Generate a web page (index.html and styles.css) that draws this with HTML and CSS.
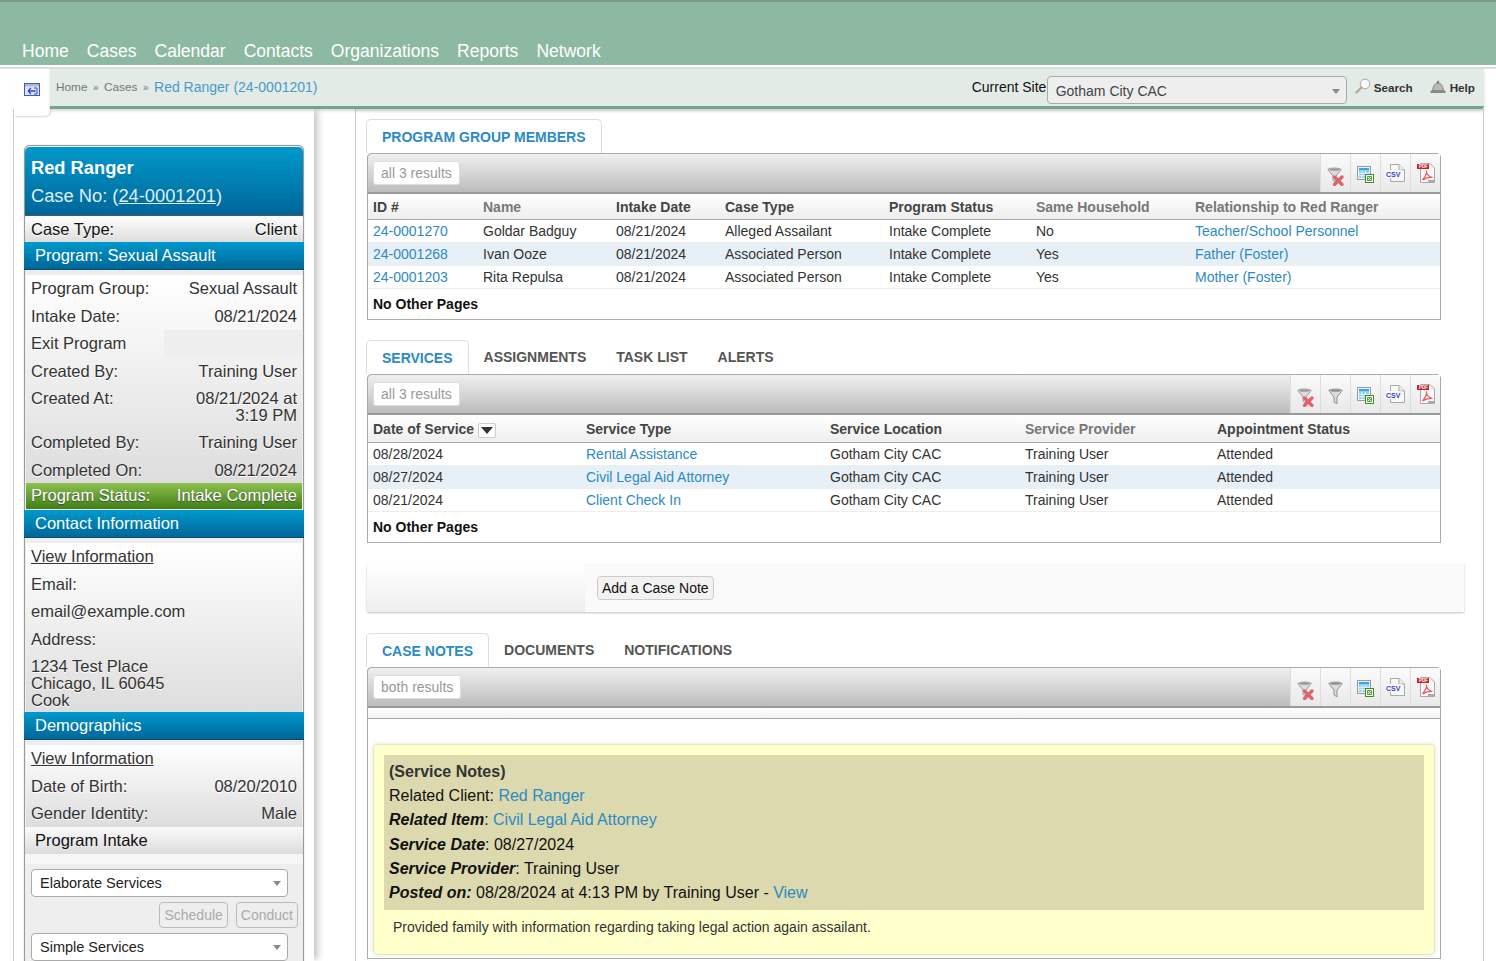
FILE: index.html
```html
<!DOCTYPE html>
<html lang="en">
<head>
<meta charset="utf-8">
<title>Red Ranger (24-0001201)</title>
<link rel="stylesheet" href="styles.css">
</head>
<body>
<svg class="defs" width="0" height="0" aria-hidden="true">
  <symbol id="i-funnel" viewBox="0 0 15 17">
    <path d="M.8 2.500C3 .6 12 .6 14.200 2.500L9 9V15.800L6 14V9Z" fill="#dcdcdc" stroke="#8f8f8f" stroke-width="1"/>
    <ellipse cx="7.500" cy="2.700" rx="5" ry="1.100" fill="#8f8f8f"/>
  </symbol>
  <symbol id="i-clear" viewBox="0 0 17 19">
    <path d="M.8 2.500C3 .6 12 .6 14.200 2.500L9 9V15L6 13.500V9Z" fill="#dcdcdc" stroke="#9a9a9a" stroke-width="1"/>
    <ellipse cx="7.500" cy="2.700" rx="5" ry="1.100" fill="#999"/>
    <path d="M7.500 10L15 17.500M15 10L7.500 17.500" stroke="#e2606a" stroke-width="3.200" stroke-linecap="round"/>
  </symbol>
  <symbol id="i-excel" viewBox="0 0 17 17">
    <rect x=".5" y=".5" width="13" height="13" fill="#e8f2f8" stroke="#9a9a9a"/>
    <rect x="2" y="2" width="10" height="2.500" fill="#39a7e4"/>
    <path d="M2 5h10v7H2z" fill="#8fd0f2"/>
    <path d="M2 7.300h10M2 9.700h10M5 5v7M8.500 5v7" stroke="#e8f6fd" stroke-width=".9"/>
    <rect x="8.500" y="8.500" width="8" height="8" fill="#fff" stroke="#3f8a2a"/>
    <rect x="10" y="10" width="5" height="5" fill="#5aa63c"/>
    <path d="M10.800 10.800l3.400 3.400M14.200 10.800l-3.400 3.400" stroke="#fff" stroke-width=".9"/>
  </symbol>
</svg>

<header class="topnav">
  <a>Home</a><a>Cases</a><a>Calendar</a><a>Contacts</a><a>Organizations</a><a>Reports</a><a>Network</a>
</header>

<div class="crumbbar">
  <div class="crumb-inner">
    <div class="crumbs">
      <a class="crumb">Home</a><span class="sep">»</span><a class="crumb">Cases</a><span class="sep">»</span><a class="crumb-cur">Red Ranger (24-0001201)</a>
    </div>
    <div class="tools">
      <span class="site-label">Current Site</span>
      <div class="site-select">Gotham City CAC<i class="caret"></i></div>
      <a class="tool tool-search">
        <svg width="16" height="18" viewBox="0 0 16 18"><circle cx="10" cy="6" r="4.800" fill="#f8f8f8" stroke="#a9a9a9"/><path d="M6.500 9.500L1.500 14.500" stroke="#b0a98c" stroke-width="2.200" stroke-linecap="round"/></svg>
        Search</a>
      <a class="tool tool-help">
        <svg width="16" height="14" viewBox="0 0 16 14"><path d="M2.500 10.500C3 6 5 3 8 3S13 6 13.500 10.500Z" fill="#b8b8b8" stroke="#777" stroke-width=".8"/><circle cx="8" cy="2" r="1.200" fill="#777"/><rect x=".5" y="10.500" width="15" height="2.500" fill="#8a8a7a"/></svg>
        Help</a>
    </div>
  </div>
</div>

<div class="columns">
  <aside class="side">
    <a class="side-toggle">
      <svg width="16" height="13" viewBox="0 0 16 13"><rect x=".5" y=".5" width="15" height="12" fill="#dfe6fb" stroke="#3a56d0"/><rect x="1" y="1" width="14" height="2.500" fill="#b9b9b9"/><path d="M4 8h3M4 8l3-3M4 8l3 3M7 8h4.500" stroke="#2c48c4" stroke-width="1.300" fill="none"/><path d="M10 5h3v6h-3" stroke="#2c48c4" fill="none"/></svg>
    </a>
    <div class="card">
      <div class="card-head">
        <div class="card-name">Red Ranger</div>
        <div class="card-case">Case No: (<u>24-0001201</u>)</div>
      </div>
      <div class="row row-type"><span>Case Type:</span><span>Client</span></div>
      <div class="sec-head">Program: Sexual Assault</div>
      <div class="sec sec-program">
        <div class="row"><span>Program Group:</span><span>Sexual Assault</span></div>
        <div class="row"><span>Intake Date:</span><span>08/21/2024</span></div>
        <div class="row"><span>Exit Program</span><span class="exit-blank"></span></div>
        <div class="row"><span>Created By:</span><span>Training User</span></div>
        <div class="row"><span>Created At:</span><span class="wrapval">08/21/2024 at<br>3:19 PM</span></div>
        <div class="row"><span>Completed By:</span><span>Training User</span></div>
        <div class="row"><span>Completed On:</span><span>08/21/2024</span></div>
      </div>
      <div class="row row-status"><span>Program Status:</span><span>Intake Complete</span></div>
      <div class="sec-head">Contact Information</div>
      <div class="sec sec-contact">
        <div class="row"><u>View Information</u></div>
        <div class="row">Email:</div>
        <div class="row">email@example.com</div>
        <div class="row">Address:</div>
        <div class="row row-addr">1234 Test Place<br>Chicago, IL 60645<br>Cook</div>
      </div>
      <div class="sec-head">Demographics</div>
      <div class="sec sec-demo">
        <div class="row"><u>View Information</u></div>
        <div class="row"><span>Date of Birth:</span><span>08/20/2010</span></div>
        <div class="row"><span>Gender Identity:</span><span>Male</span></div>
      </div>
      <div class="sec-head sec-head-light">Program Intake</div>
      <div class="intake">
        <div class="pick">Elaborate Services<i class="caret"></i></div>
        <div class="pick-actions"><button class="btn-off" disabled>Schedule</button><button class="btn-off" disabled>Conduct</button></div>
        <div class="pick">Simple Services<i class="caret"></i></div>
      </div>
    </div>
  </aside>

  <main class="main">
    <section class="block">
      <nav class="tabs"><a class="tab tab-on">PROGRAM GROUP MEMBERS</a></nav>
      <div class="grid-box">
        <div class="grid-bar">
          <span class="chip">all 3 results</span>
          <div class="bar-icons">
            <a><svg class="ic ic-clear"><use href="#i-clear"/></svg></a>
            <a><svg class="ic ic-excel"><use href="#i-excel"/></svg></a>
            <a><svg class="ic ic-csv" viewBox="0 0 19 18"><path class="doc" d="M4.500 .5H13L18.500 6V17.500H4.500Z"/><path class="doc-fold" d="M13 .5V6H18.500"/><rect class="csvbg" y="6" width="16" height="8"/><text x="0" y="13" class="csvtxt">CSV</text></svg></a>
            <a><svg class="ic ic-pdf" viewBox="0 0 18 20"><path class="doc" d="M3.500 .5H13L17.500 5V19.500H3.500Z"/><rect class="pdfbar" y="1" width="12" height="5"/><text x="2" y="5.200" class="pdftxt">PDF</text><path class="acro" d="M5.500 17C8 14 10 10 9.500 7.500C9 10 11 13.500 15.500 14.500C12 14 8.500 15 5.500 17Z"/><rect class="pdfline" x="11" y="17" width="6" height="2"/></svg></a>
          </div>
        </div>
        <table class="grid">
          <colgroup><col class="m1"><col class="m2"><col class="m3"><col class="m4"><col class="m5"><col class="m6"><col></colgroup>
          <thead><tr><th>ID #</th><th class="dim">Name</th><th>Intake Date</th><th>Case Type</th><th>Program Status</th><th class="dim">Same Household</th><th class="dim">Relationship to Red Ranger</th></tr></thead>
          <tbody>
            <tr><td><a>24-0001270</a></td><td>Goldar Badguy</td><td>08/21/2024</td><td>Alleged Assailant</td><td>Intake Complete</td><td>No</td><td><a>Teacher/School Personnel</a></td></tr>
            <tr class="alt"><td><a>24-0001268</a></td><td>Ivan Ooze</td><td>08/21/2024</td><td>Associated Person</td><td>Intake Complete</td><td>Yes</td><td><a>Father (Foster)</a></td></tr>
            <tr><td><a>24-0001203</a></td><td>Rita Repulsa</td><td>08/21/2024</td><td>Associated Person</td><td>Intake Complete</td><td>Yes</td><td><a>Mother (Foster)</a></td></tr>
          </tbody>
        </table>
        <div class="grid-foot">No Other Pages</div>
      </div>
    </section>

    <section class="block block-services">
      <nav class="tabs"><a class="tab tab-on">SERVICES</a><a class="tab">ASSIGNMENTS</a><a class="tab">TASK LIST</a><a class="tab">ALERTS</a></nav>
      <div class="grid-box">
        <div class="grid-bar">
          <span class="chip">all 3 results</span>
          <div class="bar-icons">
            <a><svg class="ic ic-clear"><use href="#i-clear"/></svg></a>
            <a><svg class="ic ic-funnel"><use href="#i-funnel"/></svg></a>
            <a><svg class="ic ic-excel"><use href="#i-excel"/></svg></a>
            <a><svg class="ic ic-csv" viewBox="0 0 19 18"><path class="doc" d="M4.500 .5H13L18.500 6V17.500H4.500Z"/><path class="doc-fold" d="M13 .5V6H18.500"/><rect class="csvbg" y="6" width="16" height="8"/><text x="0" y="13" class="csvtxt">CSV</text></svg></a>
            <a><svg class="ic ic-pdf" viewBox="0 0 18 20"><path class="doc" d="M3.500 .5H13L17.500 5V19.500H3.500Z"/><rect class="pdfbar" y="1" width="12" height="5"/><text x="2" y="5.200" class="pdftxt">PDF</text><path class="acro" d="M5.500 17C8 14 10 10 9.500 7.500C9 10 11 13.500 15.500 14.500C12 14 8.500 15 5.500 17Z"/><rect class="pdfline" x="11" y="17" width="6" height="2"/></svg></a>
          </div>
        </div>
        <table class="grid grid-services">
          <colgroup><col class="s1"><col class="s2"><col class="s3"><col class="s4"><col></colgroup>
          <thead><tr><th>Date of Service <span class="sort"><i></i></span></th><th>Service Type</th><th>Service Location</th><th class="dim">Service Provider</th><th>Appointment Status</th></tr></thead>
          <tbody>
            <tr><td>08/28/2024</td><td><a>Rental Assistance</a></td><td>Gotham City CAC</td><td>Training User</td><td>Attended</td></tr>
            <tr class="alt"><td>08/27/2024</td><td><a>Civil Legal Aid Attorney</a></td><td>Gotham City CAC</td><td>Training User</td><td>Attended</td></tr>
            <tr><td>08/21/2024</td><td><a>Client Check In</a></td><td>Gotham City CAC</td><td>Training User</td><td>Attended</td></tr>
          </tbody>
        </table>
        <div class="grid-foot">No Other Pages</div>
      </div>
    </section>

    <div class="note-actions">
      <div class="note-actions-left"></div>
      <div class="note-actions-right"><button class="btn-add">Add a Case Note</button></div>
    </div>

    <section class="block block-notes">
      <nav class="tabs"><a class="tab tab-on">CASE NOTES</a><a class="tab">DOCUMENTS</a><a class="tab">NOTIFICATIONS</a></nav>
      <div class="grid-box grid-box-notes">
        <div class="grid-bar">
          <span class="chip">both results</span>
          <div class="bar-icons">
            <a><svg class="ic ic-clear"><use href="#i-clear"/></svg></a>
            <a><svg class="ic ic-funnel"><use href="#i-funnel"/></svg></a>
            <a><svg class="ic ic-excel"><use href="#i-excel"/></svg></a>
            <a><svg class="ic ic-csv" viewBox="0 0 19 18"><path class="doc" d="M4.500 .5H13L18.500 6V17.500H4.500Z"/><path class="doc-fold" d="M13 .5V6H18.500"/><rect class="csvbg" y="6" width="16" height="8"/><text x="0" y="13" class="csvtxt">CSV</text></svg></a>
            <a><svg class="ic ic-pdf" viewBox="0 0 18 20"><path class="doc" d="M3.500 .5H13L17.500 5V19.500H3.500Z"/><rect class="pdfbar" y="1" width="12" height="5"/><text x="2" y="5.200" class="pdftxt">PDF</text><path class="acro" d="M5.500 17C8 14 10 10 9.500 7.500C9 10 11 13.500 15.500 14.500C12 14 8.500 15 5.500 17Z"/><rect class="pdfline" x="11" y="17" width="6" height="2"/></svg></a>
          </div>
        </div>
        <div class="grid-empty"></div>
        <article class="note">
          <div class="note-meta">
            <div class="note-title">(Service Notes)</div>
            <div>Related Client: <a>Red Ranger</a></div>
            <div><b><i>Related Item</i></b>: <a>Civil Legal Aid Attorney</a></div>
            <div><b><i>Service Date</i></b>: 08/27/2024</div>
            <div><b><i>Service Provider</i></b>: Training User</div>
            <div><b><i>Posted on:</i></b> 08/28/2024 at 4:13 PM by Training User - <a>View</a></div>
          </div>
          <p class="note-body">Provided family with information regarding taking legal action again assailant.</p>
        </article>
      </div>
    </section>
  </main>
</div>
</body>
</html>
```

FILE: styles.css
```css
* { box-sizing: border-box; }
html, body { margin: 0; height: 961px; overflow: hidden; }
body { font-family: "Liberation Sans", Arial, sans-serif; font-size: 14px; color: #333; background: #fff; }
.defs { position: absolute; }

/* top navigation */
.topnav {
  height: 65px; background: #8db9a3; border-top: 2px solid #7b9c8c;
  display: flex; align-items: flex-end; gap: 18px; padding: 0 0 3px 22px;
}
.topnav a { color: #fff; font-size: 17.550px; line-height: 21px; }

/* breadcrumb bar */
.crumbbar {
  height: 44px; padding: 4px 12px 0 50px;
  background: linear-gradient(#fff 0, #fff 2px, #ddd 2px, #ddd 4px, transparent 4px);
  position: relative; z-index: 1;
}
.crumb-inner {
  height: 40px; padding: 0 9px 0 6px; background: #e2ebe5; border-bottom: 3px solid #6fa68c;
  border-radius: 0 0 3px 0; box-shadow: 0 2px 3px rgba(0,0,0,.15);
  display: flex; justify-content: space-between;
}
.crumbs { display: flex; align-items: center; padding-bottom: 1px; }
.crumb { font-size: 11.800px; color: #777; }
.sep { font-size: 10px; color: #777; margin: 0 5.500px; }
.crumb-cur { font-size: 14px; color: #4a9ac8; }
.tools { display: flex; align-items: flex-start; padding-top: 7px; }
.site-label { color: #111; font-size: 14px; line-height: 17px; margin-top: 3px; width: 75px; }
.site-select {
  width: 300px; height: 28px; border: 1px solid #aaa; border-radius: 4px; background: #eee;
  padding: 6px 0 0 8px; font-size: 14px; line-height: 16px; color: #444; position: relative;
}
.caret {
  position: absolute; right: 6px; top: 12px; width: 0; height: 0;
  border-left: 4px solid transparent; border-right: 4px solid transparent; border-top: 5px solid #888;
}
.tool { display: flex; align-items: center; font-size: 11.700px; font-weight: bold; color: #333; height: 18px; margin-top: 2px; }
.tool-search { margin-left: 8px; gap: 3px; }
.tool-help { margin-left: 17px; gap: 4px; }

/* columns */
.columns { display: flex; height: 852px; padding-left: 13px; }
.side {
  width: 301px; background: #fff; border-left: 1px solid #ccc;
  padding: 36px 0 0 10px; position: relative;
  box-shadow: 6px 0 6px -2px rgba(0,0,0,.22);
}
.side-toggle {
  position: absolute; left: 0; top: -40px; width: 36px; height: 47px; background: #fff;
  border-radius: 0 0 5px 0; box-shadow: 1px 1px 2px rgba(0,0,0,.15);
  display: flex; padding: 14px 0 0 10px;
}
.side-toggle svg { display: block; }

/* sidebar card */
.card {
  width: 280px; border: 1px solid #999; border-bottom: 0; border-radius: 6px 6px 0 0;
  background: #eee; box-shadow: 0 0 1px #999; color: #333; font-size: 16.500px;
}
.card-head {
  height: 69px; margin-top: 1px; border-radius: 5px 5px 0 0; padding: 6px 6px 0; color: #fff;
  background: linear-gradient(#0099cc, #006699); border-bottom: 1px solid #555;
}
.card-name { font-size: 18.300px; font-weight: bold; line-height: 30px; }
.card-case { font-size: 18.300px; line-height: 26px; color: #dfeef6; }
.row {
  display: flex; justify-content: space-between; padding: 5px 6px; line-height: 17px; min-height: 27.500px;
  text-shadow: 0 1px 0 #fff;
}
.row-type { height: 26px; min-height: 26px; background: linear-gradient(#fff, #ddd); border-radius: 4px 4px 0 0; color: #111; }
.sec-head {
  height: 28px; padding: 0 11px; line-height: 26px; color: #fff; font-size: 16.500px;
  background: linear-gradient(#0099cc, #006699); border-bottom: 1px solid #04506f; margin: 0 -1px;
}
.sec-head-light { background: linear-gradient(#fafafa, #ddd); color: #111; border-bottom: 1px solid #ddd; height: 27px; margin: 0; padding: 0 10px; }
.sec { margin: 5px 1px 0; background: linear-gradient(#fff, #ddd); }
.sec .row { padding-left: 5px; padding-right: 5px; }
.sec-program { height: 208px; }
.sec-contact { height: 169px; }
.sec-demo { height: 82px; }
.exit-blank { width: 138px; height: 27px; margin: -5px -5px -5px 0; background: #eee; }
.wrapval { text-align: right; }
.row-addr { display: block; }
.row-status {
  height: 26px; min-height: 26px; padding: 4px 5px; margin: 0 1px 1px; color: #fff; text-shadow: 0 1px 1px #444;
  background: linear-gradient(#8dc04f, #3f7f14);
}
.intake { padding: 5px 5px 0 6px; background: #eee; border-top: 10px solid #f6f6f6; height: 122px; }
.pick {
  width: 257px; height: 28px; border: 1px solid #aaa; border-radius: 4px; background: #fff; color: #222;
  font-size: 14.500px; line-height: 26px; padding-left: 8px; position: relative;
}
.pick .caret { top: 11px; right: 6px; }
.pick-actions { display: flex; justify-content: flex-end; gap: 8px; margin: 5px 0; height: 26px; }
.btn-off {
  height: 26px; border: 1px solid #bbb; border-radius: 4px; background: #eee; color: #aaa;
  font: 14px "Liberation Sans", sans-serif; padding: 0 4px;
}

/* main panel */
.main {
  width: 1129px; margin-left: 41px; background: #fff; border-left: 1px solid #ccc; border-right: 1px solid #ccc;
  padding: 10px 0 0 10px; box-shadow: inset 0 5px 4px -4px rgba(0,0,0,.12);
}
.tabs { display: flex; height: 34px; }
.tab { padding: 0 15px; height: 34px; line-height: 35px; font-size: 14px; font-weight: bold; color: #555; }
.tab-on {
  color: #2c8ac4; background: #fff; border: 1px solid #ddd; border-bottom: 0; border-radius: 5px 5px 0 0;
  position: relative; z-index: 1;
}
.block-services, .block-notes { margin-top: 20px; }
.grid-box { width: 1074px; margin-left: 1px; border: 1px solid #aaa; border-top: 0; border-radius: 5px 5px 0 0; background: #fff; }
.grid-bar {
  height: 41px; margin: 0 -1px; display: flex; justify-content: space-between; align-items: flex-start;
  background: linear-gradient(#f0f0f0, #bcbcbc); border: 1px solid #aaa; border-bottom: 2px solid #999; border-radius: 5px 5px 0 0;
  padding: 7px 0 0 5px;
}
.chip {
  height: 24px; line-height: 22px; padding: 0 7px; background: #fff; border: 1px solid #ddd; border-radius: 3px;
  color: #999; font-size: 14px;
}
.bar-icons { display: flex; margin-top: -7px; }
.bar-icons a {
  width: 30px; height: 38px; background: linear-gradient(#fafafa, #e9e9e9); border-left: 1px solid #ddd;
  display: flex; align-items: flex-start; justify-content: center;
}
.ic { display: block; }
.ic-clear { width: 17px; height: 19px; margin-top: 13px; }
.ic-funnel { width: 15px; height: 17px; margin-top: 13px; }
.ic-excel { width: 17px; height: 17px; margin-top: 12px; }
.ic-csv { width: 19px; height: 18px; margin-top: 10px; }
.ic-pdf { width: 18px; height: 20px; margin-top: 9px; }
.doc { fill: #f8f8f8; stroke: #a8a8a8; }
.doc-fold { fill: #eee; stroke: #a8a8a8; }
.csvbg { fill: #f8f8f8; }
.csvtxt { font: bold 7px "Liberation Sans", sans-serif; fill: #3b3fc0; }
.pdfbar { fill: #c9202a; }
.pdftxt { font: bold 4.500px "Liberation Sans", sans-serif; fill: #fff; }
.acro { fill: none; stroke: #ea5a5f; stroke-width: 1.200; }
.pdfline { fill: #aaa; }

/* tables */
.grid { width: 1072px; border-collapse: collapse; table-layout: fixed; font-size: 14px; }
.grid th {
  height: 25px; padding: 2px 5px 0; text-align: left; font-weight: bold; color: #444; font-size: 14px;
  background: linear-gradient(#fff, #eee); border-bottom: 1px solid #aaa; white-space: nowrap;
}
.grid-services th { height: 28px; }
.grid th.dim { color: #777; }
.grid td { height: 23px; padding: 0 5px; color: #333; border-bottom: 1px solid #eee; white-space: nowrap; }
.grid a { color: #2c8ac4; }
.alt td { background: #e8f0f7; }
.m1 { width: 110px; } .m2 { width: 133px; } .m3 { width: 109px; } .m4 { width: 164px; } .m5 { width: 147px; } .m6 { width: 159px; }
.s1 { width: 213px; } .s2 { width: 244px; } .s3 { width: 195px; } .s4 { width: 192px; }
.grid-foot { height: 30px; padding: 0 5px; line-height: 31px; font-weight: bold; color: #111; }
.sort {
  display: inline-flex; width: 18px; height: 15px; align-items: center; justify-content: center; vertical-align: 0;
  border: 1px solid #ccc; border-radius: 2px; background: #fff;
}
.sort i { border-left: 6px solid transparent; border-right: 6px solid transparent; border-top: 7px solid #333; }

/* add note strip */
.note-actions {
  display: flex; width: 1097px; height: 48px; margin: 21px 0 0 1px; box-shadow: 0 1px 2px rgba(0,0,0,.25);
}
.note-actions-left { width: 218px; background: linear-gradient(#fff, #eee); }
.note-actions-right { flex: 1; background: #fafafa; padding: 12px 0 0 12px; }
.btn-add {
  height: 24px; padding: 0 4px; border: 1px solid #ccc; border-radius: 4px; background: #f2f2f2; color: #111;
  font: 14px "Liberation Sans", sans-serif;
}
.block-notes { margin-top: 21px; }

/* notes */
.grid-box-notes { height: 292px; padding: 0 5px; }
.grid-box-notes .grid-bar { margin: 0 -6px; }
.grid-empty { height: 11px; margin: 0 -5px 25px; background: linear-gradient(#fff, #f2f2f2); border-bottom: 1px solid #aaa; }
.note {
  width: 1062px; height: 211px; background: #ffc; border: 1px solid #e8e8c0; border-radius: 5px;
  padding: 10px; box-shadow: 0 0 4px rgba(0,0,0,.12);
}
.note-meta { height: 155px; background: #dcd9ae; padding: 5px 5px 0; font-size: 16px; line-height: 24.200px; color: #111; }
.note-title { font-weight: bold; color: #333; }
.note-meta a { color: #2c8ac4; }
.note-body { margin: 9px 0 0 9px; font-size: 14px; line-height: 17px; color: #333; }
```
